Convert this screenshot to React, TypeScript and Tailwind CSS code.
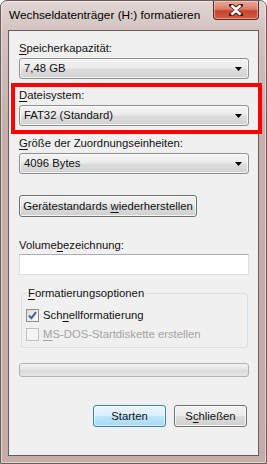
import React from "react";

const U = ({ children }: { children: React.ReactNode }) => (
  <span className="underline underline-offset-[2px] decoration-1">{children}</span>
);

const Arrow = () => (
  <svg width="7" height="4" viewBox="0 0 7 4" className="block">
    <path d="M0 0H7L3.5 4Z" fill="#000" />
  </svg>
);

const Combo = ({ value }: { value: string }) => (
  <div className="flex h-[21px] w-[230px] items-center justify-between rounded-[3px] border border-[#8e8f8f] bg-[linear-gradient(#f3f3f3_0%,#ebebeb_48%,#dddddd_52%,#d2d2d2_100%)] pl-[4px] pr-[6px] shadow-[inset_0_0_0_1px_rgba(255,255,255,0.7)]">
    <span>{value}</span>
    <Arrow />
  </div>
);

const Label = ({ children, className = "" }: { children: React.ReactNode; className?: string }) => (
  <div className={"h-[15px] leading-[15px] whitespace-nowrap " + className}>{children}</div>
);

export default function App() {
  return (
    <div
      className="relative h-[464px] w-[267px] overflow-hidden text-[11.3px] text-[#111]"
      style={{ fontFamily: '"Liberation Sans", Arial, sans-serif' }}
    >
      {/* window frame */}
      <div className="flex h-full w-full flex-col rounded-t-[7px] border border-[#6c5d5b] bg-[linear-gradient(#e1d6d4_0px,#d3c3c0_30px,#c7b0ac_120px,#c4aca8_100%)] shadow-[inset_0_0_0_1px_rgba(255,255,255,0.45)]">
        {/* title bar */}
        <div className="flex h-[29px] shrink-0 items-start">
          <div className="whitespace-nowrap pl-[8px] pt-[7px] text-[11.8px] leading-[15px] text-black">
            Wechseldatenträger (H:) formatieren
          </div>
          <div className="ml-auto mr-[7px] flex h-[19px] w-[46px] shrink-0 items-center justify-center rounded-b-[4px] border border-t-0 border-[#5a2b22] bg-[linear-gradient(#eaa898_0%,#dc7e69_45%,#c6432c_55%,#d65c40_100%)] shadow-[inset_0_0_0_1px_rgba(255,220,210,0.5)]">
            <svg width="14" height="12" viewBox="0 0 14 12">
              <path d="M2 1L7 5L12 1M2 11L7 7L12 11" stroke="#4a1a12" strokeWidth="4.2" fill="none" strokeLinecap="round" />
              <path d="M2.4 1.4L7 5.2L11.6 1.4M2.4 10.6L7 6.8L11.6 10.6" stroke="#fff" strokeWidth="2.6" fill="none" />
            </svg>
          </div>
        </div>

        {/* client area */}
        <div className="mx-[7px] mb-[7px] flex flex-1 flex-col border border-[#6b5c5a] bg-[#f0f0f0] pl-[10px] pr-[10px]">
          <Label className="mt-[10px]">
            <U>S</U>peicherkapazität:
          </Label>
          <div className="mt-[2px]">
            <Combo value="7,48 GB" />
          </div>

          <Label className="mt-[9px]">
            <U>D</U>ateisystem:
          </Label>
          <div className="mt-[2px]">
            <Combo value="FAT32 (Standard)" />
          </div>

          <Label className="mt-[10px]">
            <U>G</U>röße der Zuordnungseinheiten:
          </Label>
          <div className="mt-[2px]">
            <Combo value="4096 Bytes" />
          </div>

          <div className="mt-[21px] flex">
            <div className="flex h-[22px] w-[178px] items-center justify-center whitespace-nowrap rounded-[3px] border border-[#707070] bg-[linear-gradient(#f2f2f2_0%,#ebebeb_48%,#dddddd_52%,#cfcfcf_100%)] shadow-[inset_0_0_0_1px_rgba(255,255,255,0.8)]">
              Gerätestandards&nbsp;<U>w</U>iederherstellen
            </div>
          </div>

          <Label className="mt-[21px]">
            Volume<U>b</U>ezeichnung:
          </Label>
          <div className="mt-[1px] h-[21px] w-[230px] border border-[#dbdfe6] border-t-[#abadb3] bg-white" />

          {/* group box */}
          <div className="relative mt-[18px] ml-[2px] h-[55px] w-[227px] rounded-[3px] border border-[#d5dfe5]">
            <div className="absolute left-[4px] top-[-8px] whitespace-nowrap bg-[#f0f0f0] px-[2px] leading-[15px]">
              <U>F</U>ormatierungsoptionen
            </div>
            <div className="mt-[14px] ml-[4px] flex items-center gap-[4px] leading-[15px]">
              <div className="flex h-[13px] w-[13px] items-center justify-center border border-[#8e8f8f] bg-[linear-gradient(135deg,#dcdcdc,#fbfbfb)]">
                <svg width="9" height="9" viewBox="0 0 9 9">
                  <path d="M1 4.5L3.4 7.2L8 1.2" stroke="#4a5f97" strokeWidth="1.9" fill="none" />
                </svg>
              </div>
              <span>
                Sch<U>n</U>ellformatierung
              </span>
            </div>
            <div className="mt-[4px] ml-[4px] flex items-center gap-[4px] leading-[15px] text-[#a3a3a3]">
              <div className="h-[13px] w-[13px] border border-[#c0c0c0] bg-[#f4f4f4]" />
              <span>
                <U>M</U>S-DOS-Startdiskette erstellen
              </span>
            </div>
          </div>

          {/* progress */}
          <div className="mt-[15px] h-[14px] w-[230px] rounded-[3px] border border-[#b2b2b2] bg-[linear-gradient(#f3f3f3,#e2e2e2_50%,#dadada_51%,#e6e6e6)]" />

          {/* buttons */}
          <div className="mt-[28px] flex justify-end gap-[8px] pr-[1px]">
            <div className="flex h-[22px] w-[73px] items-center justify-center rounded-[3px] border border-[#3c7fb1] bg-[linear-gradient(#eaf6fd_0%,#d9f0fc_48%,#bee6fd_52%,#a7d9f5_100%)] shadow-[inset_0_0_0_1px_rgba(255,255,255,0.6)]">
              Starten
            </div>
            <div className="flex h-[22px] w-[73px] items-center justify-center rounded-[3px] border border-[#707070] bg-[linear-gradient(#f2f2f2_0%,#ebebeb_48%,#dddddd_52%,#cfcfcf_100%)] shadow-[inset_0_0_0_1px_rgba(255,255,255,0.8)]">
              <span>
                S<U>c</U>hließen
              </span>
            </div>
          </div>
        </div>
      </div>

      {/* red highlight */}
      <div className="absolute left-[11px] top-[83px] h-[51px] w-[251px] border-[4px] border-[#ff0000]" />
    </div>
  );
}
